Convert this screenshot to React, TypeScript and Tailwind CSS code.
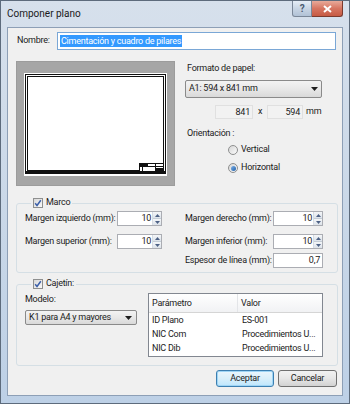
import React from 'react';

// Windows 7 style checkbox (checked)
function CheckBox() {
  return (
    <span className="inline-flex w-[10px] h-[10px] border border-[#8e8f8f] bg-gradient-to-br from-[#d8d8d8] to-[#fafafa] items-center justify-center shrink-0">
      <svg width="8" height="8" viewBox="0 0 8 8">
        <path d="M1.2 4.2 L3 6.4 L6.8 1.2" stroke="#3a5ea8" strokeWidth="1.5" fill="none" />
      </svg>
    </span>
  );
}

function Radio({ on }: { on?: boolean }) {
  return (
    <span className="inline-flex w-[10px] h-[10px] rounded-full border border-[#8e8f8f] bg-gradient-to-br from-[#d6d6d6] to-[#fbfbfb] items-center justify-center shrink-0">
      {on && <span className="w-[5px] h-[5px] rounded-full bg-gradient-to-br from-[#7fb2e8] to-[#1c5fa8]" />}
    </span>
  );
}

function Arrow() {
  return (
    <svg width="7" height="4" viewBox="0 0 7 4">
      <path d="M0 0 H7 L3.5 4 Z" fill="#1e1e1e" />
    </svg>
  );
}

function Spin({ value, w }: { value: string; w: string }) {
  return (
    <div className={`flex h-[15px] border border-[#abadb3] bg-white shrink-0 ${w}`}>
      <span className="flex-1 text-right pr-[1px] leading-[13px]">{value}</span>
      <div className="flex flex-col w-[9px] border-l border-[#d6dce4]">
        <span className="flex-1 flex items-center justify-center bg-gradient-to-b from-[#f4f6f8] to-[#dde3ea] border-b border-[#c3ccd6]">
          <svg width="5" height="3" viewBox="0 0 5 3"><path d="M0 3 L2.5 0 L5 3 Z" fill="#4d6185" /></svg>
        </span>
        <span className="flex-1 flex items-center justify-center bg-gradient-to-b from-[#f4f6f8] to-[#dde3ea]">
          <svg width="5" height="3" viewBox="0 0 5 3"><path d="M0 0 L2.5 3 L5 0 Z" fill="#4d6185" /></svg>
        </span>
      </div>
    </div>
  );
}

function Field({ label, value, w, lw }: { label: string; value: string; w: string; lw: string }) {
  return (
    <div className="flex items-center h-[15px]">
      <span className={`whitespace-nowrap shrink-0 ${lw}`}>{label}</span>
      <Spin value={value} w={w} />
    </div>
  );
}

function PaperPreview() {
  return (
    <div className="w-[159px] h-[125px] bg-[#a6a6a6] border border-[#9c9c9c] pl-[7px] pt-[11px] shrink-0">
      <svg width="143" height="103" viewBox="0 0 143 103">
        <rect x="0" y="0" width="143" height="103" fill="#ffffff" />
        <rect x="1.5" y="1.5" width="140" height="99" fill="none" stroke="#111" strokeWidth="1" />
        <rect x="3.5" y="3.5" width="136" height="94" fill="none" stroke="#111" strokeWidth="1" />
        <rect x="1" y="98" width="141" height="3" fill="#111" />
        {/* title block */}
        <rect x="115.5" y="90.5" width="24" height="8" fill="#fff" stroke="#111" strokeWidth="1" />
        <rect x="116" y="91" width="7" height="3" fill="#111" />
        <line x1="116" y1="93.5" x2="139" y2="93.5" stroke="#111" strokeWidth="1" />
        <line x1="123.5" y1="91" x2="123.5" y2="94" stroke="#111" strokeWidth="1" />
        <line x1="131.5" y1="91" x2="131.5" y2="98" stroke="#111" strokeWidth="1" />
        <line x1="118.5" y1="94" x2="118.5" y2="98" stroke="#111" strokeWidth="1" />
        <rect x="132" y="95" width="7" height="3" fill="#111" />
      </svg>
    </div>
  );
}

export default function App() {
  return (
    <div className="w-[350px] h-[404px] flex flex-col px-[6px] pb-[7px] border border-[#5d6b7c] bg-gradient-to-b from-[#d6e0ec] via-[#cad8e8] to-[#bdd0e6] font-['Roboto',sans-serif] text-[9px] tracking-[-0.25px] text-black overflow-hidden">
      {/* title bar */}
      <div className="h-[26px] flex items-start shrink-0">
        <span className="text-[10px] tracking-normal mt-[6px] leading-[14px] text-[#1a1a1a]">Componer plano</span>
        <div className="ml-auto flex">
          <span className="w-[20px] h-[16px] flex items-center justify-center rounded-bl-[3px] border border-t-0 border-[#7a8798] bg-gradient-to-b from-[#e5edf6] via-[#c8d5e4] to-[#b1c2d6] text-[10px] font-bold text-[#4a5a70]">?</span>
          <span className="w-[31px] h-[16px] flex items-center justify-center rounded-br-[3px] border border-t-0 border-l-0 border-[#7b3a2e] bg-gradient-to-b from-[#e8aa9a] via-[#d67561] to-[#c65a43]">
            <svg width="9" height="8" viewBox="0 0 9 8">
              <path d="M1 1 L8 7 M8 1 L1 7" stroke="#ffffff" strokeWidth="2" />
            </svg>
          </span>
        </div>
      </div>

      {/* client */}
      <div className="flex-1 flex flex-col border border-[#8d9fb6] bg-[#f0f0f0] text-[#1b1b1b]">
        {/* Nombre */}
        <div className="flex items-center h-[18px] mt-[4px]">
          <span className="w-[40px] ml-[9px]">Nombre:</span>
          <div className="w-[279px] h-[18px] border border-[#7aa7d6] bg-white flex items-center pl-[2px]">
            <span className="bg-[#3399ff] text-white leading-[12px] px-[1px]">Cimentación y cuadro de pilares</span>
          </div>
        </div>

        {/* preview + paper format */}
        <div className="flex mt-[11px] ml-[8px]">
          <PaperPreview />
          <div className="ml-[10px] flex flex-col">
            <span className="h-[14px] leading-[14px] ml-[2px]">Formato de papel:</span>
            <div className="mt-[5px] w-[137px] h-[18px] border border-[#8a8a8a] rounded-[2px] bg-gradient-to-b from-[#f3f3f3] via-[#e8e8e8] to-[#d9d9d9] flex items-center pl-[3px] pr-[3px]">
              <span>A1: 594 x 841 mm</span>
              <span className="ml-auto"><Arrow /></span>
            </div>
            <div className="mt-[7px] flex items-center h-[14px]">
              <span className="ml-[30px] w-[38px] h-[14px] border border-[#e0e0e0] bg-[#f2f2f2] text-right pr-[2px] leading-[12px]">841</span>
              <span className="w-[14px] text-center">x</span>
              <span className="w-[36px] h-[14px] border border-[#e0e0e0] bg-[#f2f2f2] text-right pr-[2px] leading-[12px]">594</span>
              <span className="ml-[3px]">mm</span>
            </div>
            <span className="mt-[7px] h-[14px] leading-[14px] ml-[2px]">Orientación :</span>
            <div className="mt-[3px] h-[14px] flex items-center ml-[43px] gap-[3px]">
              <Radio />
              <span>Vertical</span>
            </div>
            <div className="mt-[4px] h-[14px] flex items-center ml-[43px] gap-[3px]">
              <Radio on />
              <span>Horizontal</span>
            </div>
          </div>
        </div>

        {/* Marco */}
        <fieldset className="mt-[11px] ml-[8px] w-[322px] border border-[#d5dfe5] rounded-[3px] px-[8px] pb-[4px]">
          <legend className="ml-[6px] px-[2px] flex items-center gap-[3px] h-[12px]">
            <CheckBox />
            <span>Marco</span>
          </legend>
          <div className="flex mt-[2px]">
            <div className="flex flex-col w-[160px]">
              <Field label="Margen izquierdo (mm):" value="10" w="w-[45px]" lw="w-[92px]" />
              <div className="mt-[8px]">
                <Field label="Margen superior (mm):" value="10" w="w-[45px]" lw="w-[92px]" />
              </div>
            </div>
            <div className="flex flex-col">
              <Field label="Margen derecho (mm):" value="10" w="w-[50px]" lw="w-[88px]" />
              <div className="mt-[8px]">
                <Field label="Margen inferior (mm):" value="10" w="w-[50px]" lw="w-[88px]" />
              </div>
              <div className="mt-[4px] flex items-center h-[15px]">
                <span className="w-[88px] whitespace-nowrap shrink-0">Espesor de línea (mm):</span>
                <div className="w-[50px] h-[15px] border border-[#abadb3] bg-white text-right pr-[2px] leading-[13px]">0,7</div>
              </div>
            </div>
          </div>
        </fieldset>

        {/* Cajetín */}
        <fieldset className="mt-[5px] ml-[8px] w-[322px] border border-[#d5dfe5] rounded-[3px] px-[8px] pb-[8px]">
          <legend className="ml-[6px] px-[2px] flex items-center gap-[3px] h-[12px]">
            <CheckBox />
            <span>Cajetín:</span>
          </legend>
          <div className="flex mt-[2px]">
            <div className="flex flex-col w-[112px]">
              <span className="h-[14px] leading-[14px]">Modelo:</span>
              <div className="mt-[4px] h-[15px] border border-[#8a8a8a] rounded-[2px] bg-gradient-to-b from-[#f3f3f3] via-[#e8e8e8] to-[#d9d9d9] flex items-center pl-[3px] pr-[4px]">
                <span className="whitespace-nowrap">K1 para A4 y mayores</span>
                <span className="ml-auto"><Arrow /></span>
              </div>
            </div>
            <div className="ml-[11px] mt-[1px] w-[175px] h-[64px] border border-[#828790] bg-white flex flex-col">
              <div className="flex h-[19px] border-b border-[#d5d5d5] bg-gradient-to-b from-[#ffffff] to-[#f1f2f4]">
                <span className="w-[89px] border-r border-[#e3e5e8] pl-[3px] leading-[18px]">Parámetro</span>
                <span className="pl-[3px] leading-[18px]">Valor</span>
              </div>
              {[
                ['ID Plano', 'ES-001'],
                ['NIC Com', 'Procedimientos U...'],
                ['NIC Dib', 'Procedimientos U...'],
              ].map(([a, b]) => (
                <div key={a} className="flex h-[14px] leading-[14px]">
                  <span className="w-[89px] pl-[3px]">{a}</span>
                  <span className="pl-[4px] whitespace-nowrap">{b}</span>
                </div>
              ))}
            </div>
          </div>
        </fieldset>

        {/* buttons */}
        <div className="flex justify-end gap-[4px] mt-[4px] pr-[5px]">
          <button className="w-[58px] h-[17px] rounded-[3px] border border-[#3c7fb1] bg-gradient-to-b from-[#eaf6fd] via-[#d9effa] to-[#bee6fd] shadow-[inset_0_0_0_1px_#9fd5f5]">Aceptar</button>
          <button className="w-[59px] h-[17px] rounded-[3px] border border-[#707070] bg-gradient-to-b from-[#f2f2f2] via-[#e6e6e6] to-[#d2d2d2]">Cancelar</button>
        </div>
      </div>
    </div>
  );
}
